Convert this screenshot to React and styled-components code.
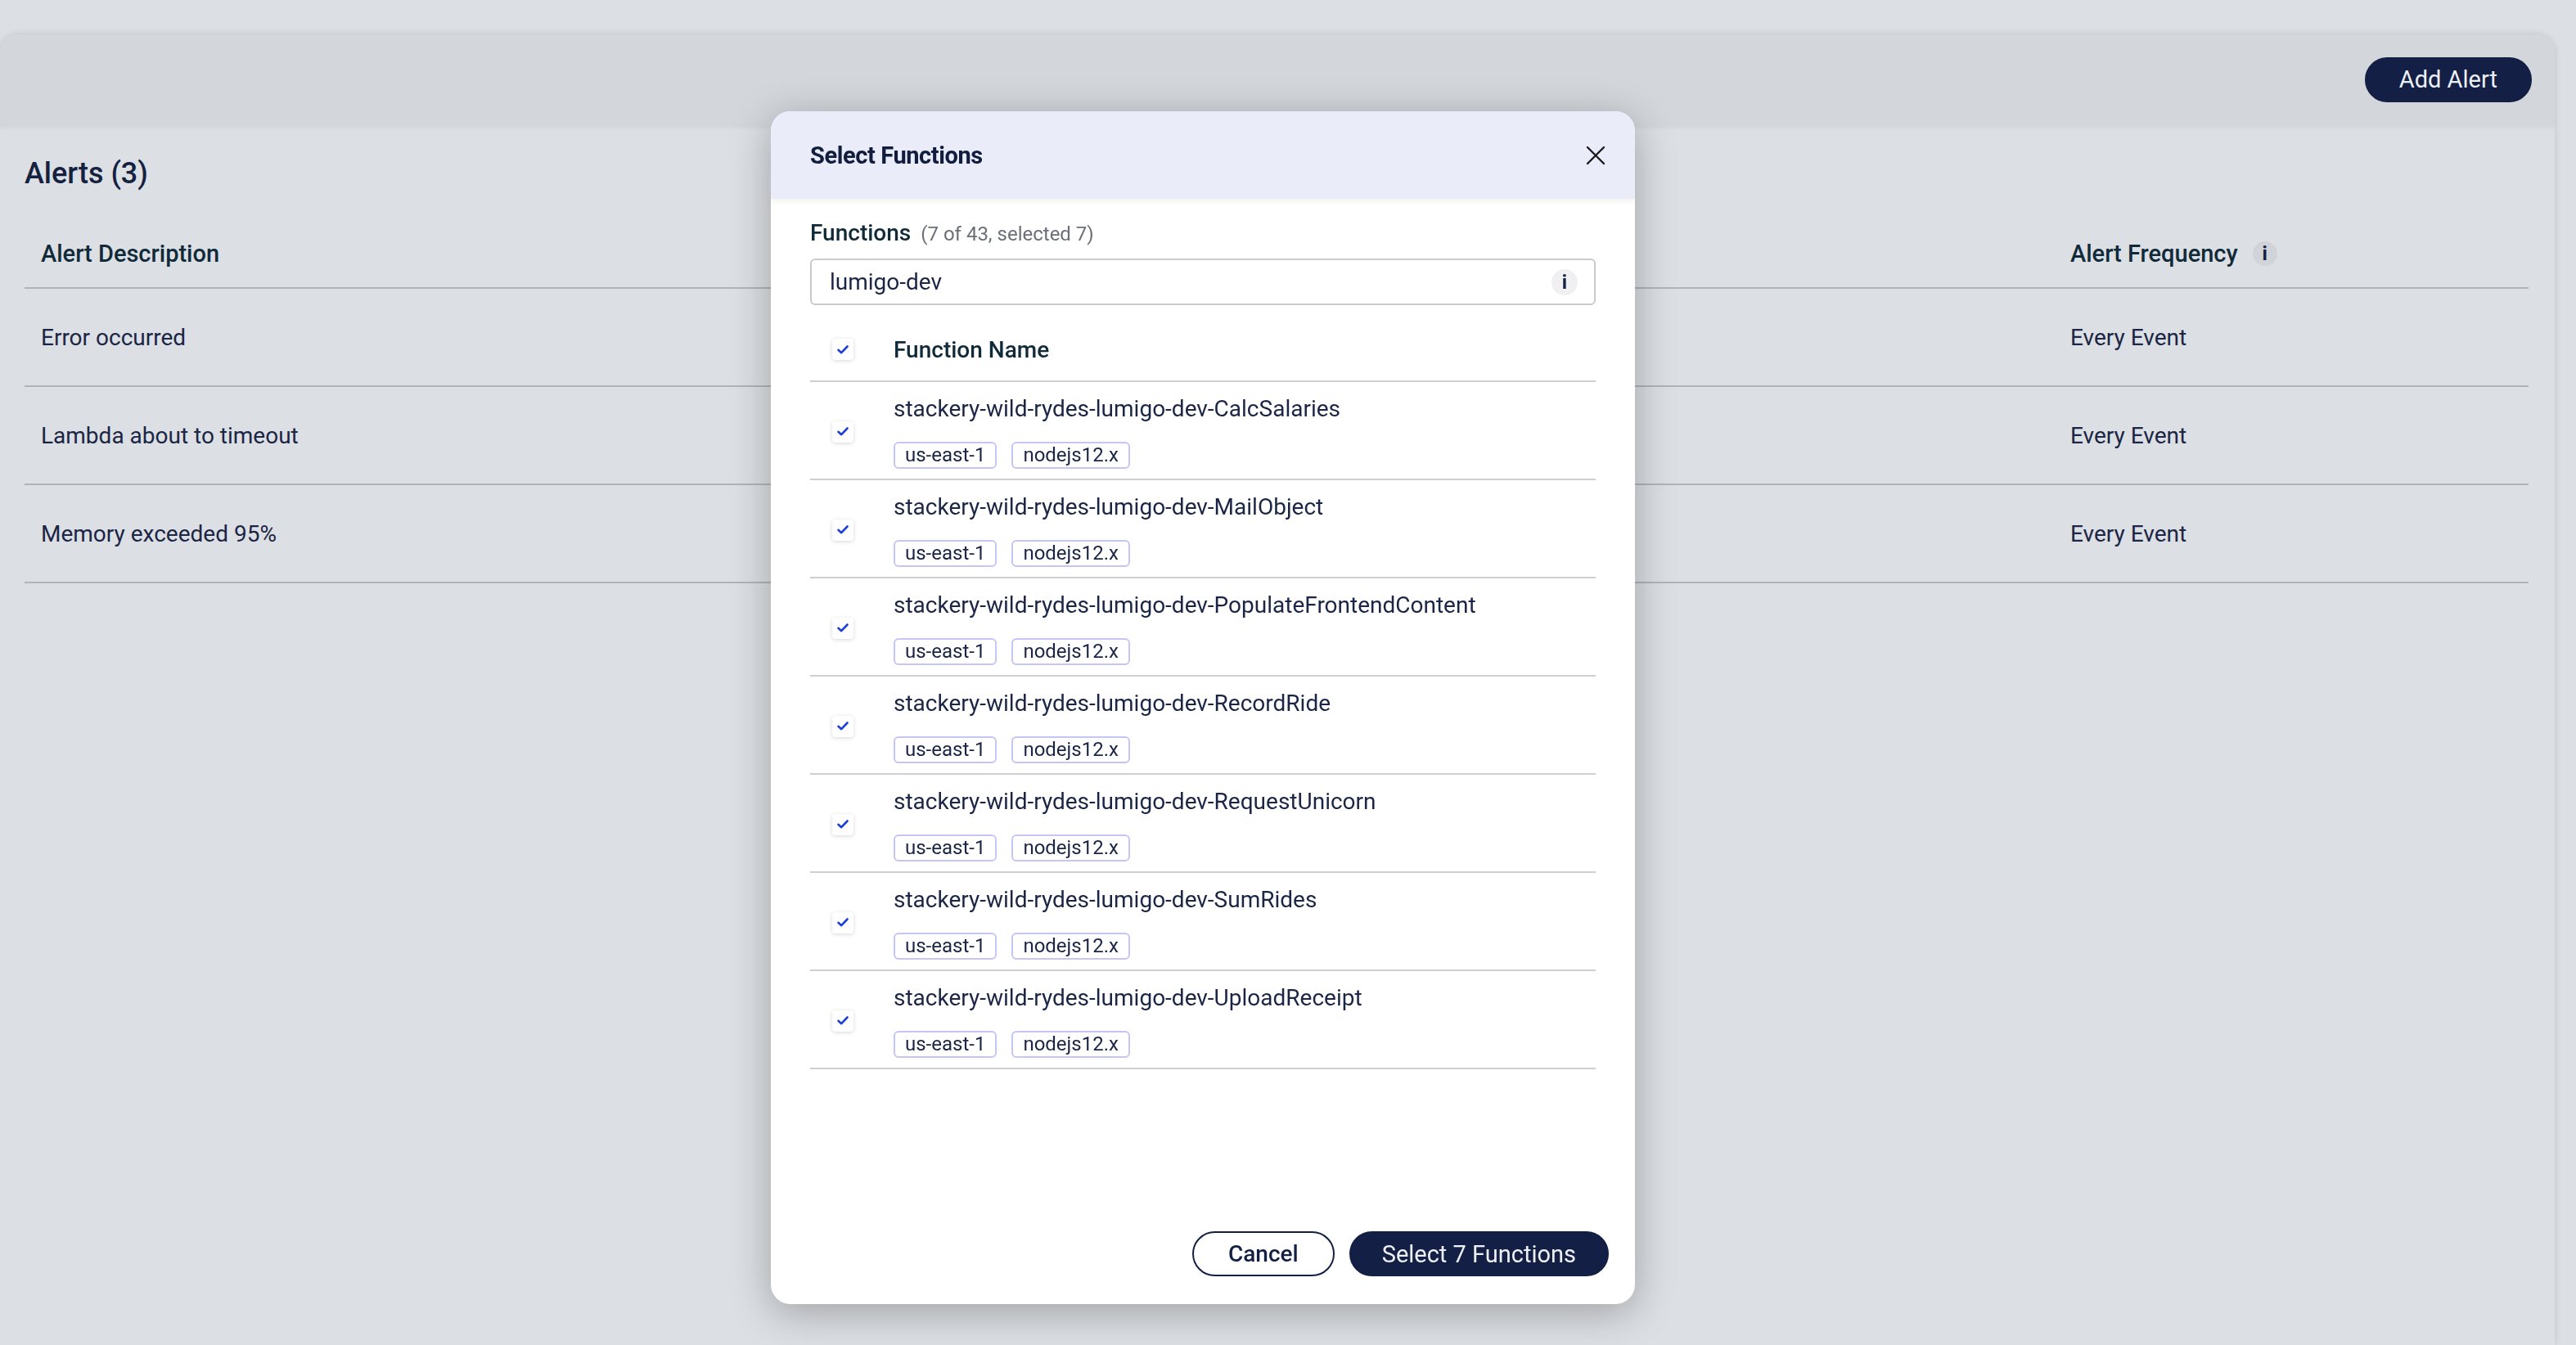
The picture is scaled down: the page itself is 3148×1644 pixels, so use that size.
import styled, { createGlobalStyle } from "styled-components";

const GlobalStyle = createGlobalStyle`
  html, body {
    margin: 0;
    padding: 0;
    background: #dcdfe3;
    font-family: Roboto, "Liberation Sans", Arial, sans-serif;
    color: #1b2545;
  }
  * { box-sizing: border-box; }
`;

const navy = "#131f45";

const Page = styled.div`
  min-height: 1644px;
  padding: 42px 26px 0 0;
`;

const Card = styled.div`
  min-height: 1602px;
  border-radius: 22px 22px 0 0;
  box-shadow: 0 0 8px rgba(0, 0, 0, 0.12);
  background: #dcdfe3;
`;

const CardHeader = styled.div`
  height: 113px;
  background: #d3d6da;
  border-radius: 22px 22px 0 0;
  display: flex;
  align-items: center;
  justify-content: flex-end;
  padding-right: 28px;
  padding-bottom: 3px;
  box-shadow: 0 2px 4px rgba(0, 0, 0, 0.04);
`;

const PillButton = styled.button`
  height: 55px;
  border-radius: 28px;
  border: 2px solid ${navy};
  background: ${(p) => (p.$outline ? "#fff" : navy)};
  color: ${(p) => (p.$outline ? navy : "#eef0f8")};
  font-family: Roboto, sans-serif;
  font-size: ${(p) => (p.$outline ? "28px" : "29px")};
  font-weight: ${(p) => (p.$outline ? 500 : 400)};
  padding: 0 ${(p) => p.$pad || 40}px;
  cursor: pointer;
`;

const CardBody = styled.div`
  padding: 0 32px 0 30px;
`;

const PageTitle = styled.h1`
  margin: 0;
  padding: 35px 0 35px;
  font-size: 36px;
  line-height: 44px;
  font-weight: 500;
  color: #14213f;
`;

const AlertRow = styled.div`
  display: grid;
  grid-template-columns: 2480px 1fr;
  align-items: center;
  height: ${(p) => (p.$head ? 84 : 120)}px;
  border-bottom: 2px solid #b1b4b9;
  padding-left: 20px;
  font-size: ${(p) => (p.$head ? 29 : 28)}px;
  font-weight: ${(p) => (p.$head ? 500 : 400)};
  color: ${(p) => (p.$head ? "#102a3a" : "#1b2545")};
`;

const HeadCell = styled.div`
  display: flex;
  align-items: center;
  gap: 18px;
`;

const InfoDot = styled.span`
  width: ${(p) => p.$size || 30}px;
  height: ${(p) => p.$size || 30}px;
  border-radius: 50%;
  background: ${(p) => p.$bg || "#d0d3d8"};
  color: #14213f;
  display: inline-flex;
  align-items: center;
  justify-content: center;
  font-size: 24px;
  font-weight: 700;
  line-height: 1;
`;

const Backdrop = styled.div`
  position: fixed;
  inset: 0;
  display: flex;
  align-items: flex-start;
  padding: 136px 0 0 942px;
`;

const Modal = styled.div`
  width: 1056px;
  height: 1458px;
  background: #fff;
  border-radius: 24px;
  box-shadow: 0 10px 50px rgba(0, 0, 0, 0.28);
  display: flex;
  flex-direction: column;
  overflow: hidden;
`;

const ModalHeader = styled.div`
  height: 107px;
  flex-shrink: 0;
  background: #ebecfa;
  display: flex;
  align-items: center;
  justify-content: space-between;
  padding: 0 32px 0 48px;
  box-shadow: 0 3px 6px rgba(0, 0, 0, 0.06);
  position: relative;
`;

const ModalTitle = styled.h2`
  margin: 0;
  font-size: 29px;
  font-weight: 700;
  letter-spacing: -0.4px;
  color: #111d3f;
`;

const CloseButton = styled.button`
  border: none;
  background: none;
  padding: 4px;
  display: flex;
  cursor: pointer;
`;

const ModalBody = styled.div`
  flex: 1;
  padding: 24px 48px 0;
`;

const FieldLabel = styled.div`
  display: flex;
  align-items: baseline;
  gap: 12px;
  line-height: 36px;
  font-size: 28px;
  font-weight: 500;
  color: #102a3a;
  margin-bottom: 12px;
`;

const LabelHint = styled.span`
  font-size: 24px;
  font-weight: 400;
  color: #6b6f78;
`;

const SearchBox = styled.div`
  height: 57px;
  border: 2px solid #cacaca;
  border-radius: 6px;
  display: flex;
  align-items: center;
  justify-content: space-between;
  padding: 0 20px 0 22px;
  font-size: 28px;
  color: #1b2545;
  margin-bottom: 16px;
`;

const FnRow = styled.div`
  display: grid;
  grid-template-columns: 80px 1fr;
  column-gap: 22px;
  align-items: center;
  border-bottom: 2px solid #cfcfcf;
  min-height: ${(p) => (p.$head ? 78 : 120)}px;
  padding: ${(p) => (p.$head ? "0" : "15px 0 12px")};
`;

const CheckCell = styled.div`
  display: flex;
  justify-content: center;
`;

const CheckBox = styled.span`
  width: 26px;
  height: 26px;
  border-radius: 4px;
  background: #fff;
  box-shadow: 0 1px 5px rgba(0, 0, 0, 0.16);
  display: flex;
  align-items: center;
  justify-content: center;
`;

const HeadLabel = styled.div`
  font-size: 28px;
  font-weight: 500;
  color: #102a3a;
`;

const FnInfo = styled.div`
  display: flex;
  flex-direction: column;
  gap: 22px;
`;

const FnName = styled.div`
  font-size: 28px;
  line-height: 36px;
  color: #1b2545;
`;

const Tags = styled.div`
  display: flex;
  gap: 18px;
`;

const Tag = styled.span`
  height: 33px;
  border: 2px solid #c4c7f5;
  border-radius: 6px;
  padding: 0 12px;
  font-size: 24px;
  line-height: 29px;
  color: #1b2545;
`;

const ModalFooter = styled.div`
  display: flex;
  justify-content: flex-end;
  gap: 18px;
  padding: 0 32px 34px;
`;

const Check = () => (
  <svg width="14" height="11" viewBox="0 0 14 11">
    <path d="M1.5 5.8 L5.2 9.2 L12.5 1.5" fill="none" stroke="#1d3fd8" strokeWidth="2.6" strokeLinecap="round" strokeLinejoin="round" />
  </svg>
);

const CloseIcon = () => (
  <svg width="24" height="24" viewBox="0 0 24 24">
    <path d="M2 2 L22 22 M22 2 L2 22" stroke="#1a1a1a" strokeWidth="2.4" strokeLinecap="round" />
  </svg>
);

const alerts = [
  { desc: "Error occurred", freq: "Every Event" },
  { desc: "Lambda about to timeout", freq: "Every Event" },
  { desc: "Memory exceeded 95%", freq: "Every Event" },
];

const prefix = "stackery-wild-rydes-lumigo-dev-";
const functions = [
  "CalcSalaries",
  "MailObject",
  "PopulateFrontendContent",
  "RecordRide",
  "RequestUnicorn",
  "SumRides",
  "UploadReceipt",
];

const App = () => (
  <>
    <GlobalStyle />
    <Page>
      <Card>
        <CardHeader>
          <PillButton $pad={40}>Add Alert</PillButton>
        </CardHeader>
        <CardBody>
          <PageTitle>Alerts (3)</PageTitle>
          <AlertRow $head>
            <HeadCell>Alert Description</HeadCell>
            <HeadCell>
              Alert Frequency <InfoDot>i</InfoDot>
            </HeadCell>
          </AlertRow>
          {alerts.map((a) => (
            <AlertRow key={a.desc}>
              <div>{a.desc}</div>
              <div>{a.freq}</div>
            </AlertRow>
          ))}
        </CardBody>
      </Card>

      <Backdrop>
        <Modal>
          <ModalHeader>
            <ModalTitle>Select Functions</ModalTitle>
            <CloseButton>
              <CloseIcon />
            </CloseButton>
          </ModalHeader>
          <ModalBody>
            <FieldLabel>
              Functions <LabelHint>(7 of 43, selected 7)</LabelHint>
            </FieldLabel>
            <SearchBox>
              lumigo-dev
              <InfoDot $size={32} $bg="#f0f0f2">i</InfoDot>
            </SearchBox>
            <FnRow $head>
              <CheckCell>
                <CheckBox>
                  <Check />
                </CheckBox>
              </CheckCell>
              <HeadLabel>Function Name</HeadLabel>
            </FnRow>
            {functions.map((fn) => (
              <FnRow key={fn}>
                <CheckCell>
                  <CheckBox>
                    <Check />
                  </CheckBox>
                </CheckCell>
                <FnInfo>
                  <FnName>{prefix + fn}</FnName>
                  <Tags>
                    <Tag>us-east-1</Tag>
                    <Tag>nodejs12.x</Tag>
                  </Tags>
                </FnInfo>
              </FnRow>
            ))}
          </ModalBody>
          <ModalFooter>
            <PillButton $outline $pad={42}>Cancel</PillButton>
            <PillButton $pad={38}>Select 7 Functions</PillButton>
          </ModalFooter>
        </Modal>
      </Backdrop>
    </Page>
  </>
);

export default App;
